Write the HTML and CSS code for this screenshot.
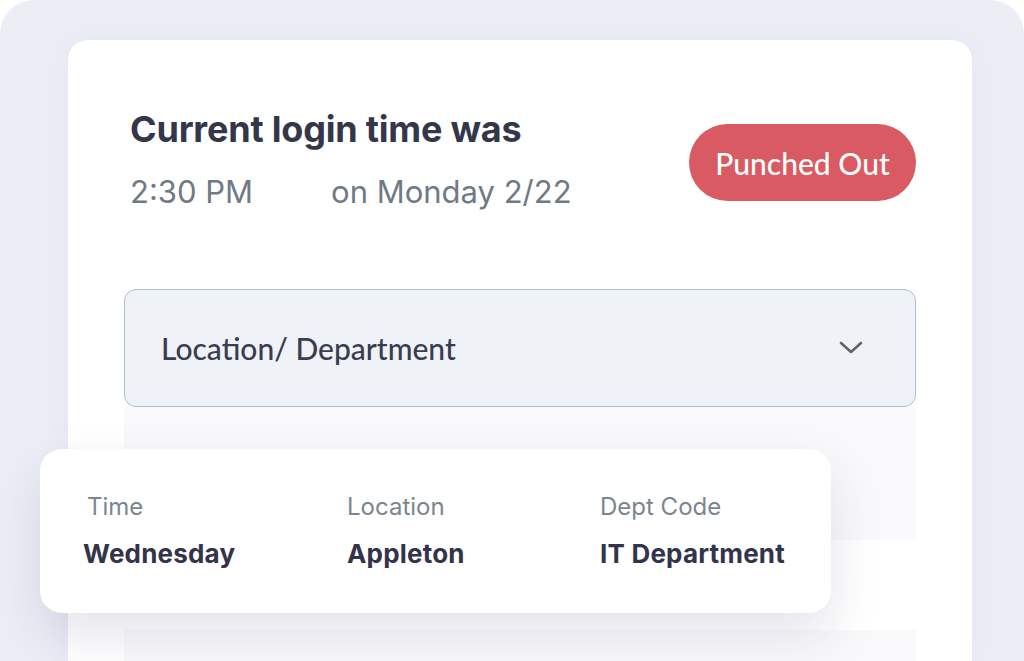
FILE: index.html
```html
<!DOCTYPE html>
<html lang="en">
<head>
  <meta charset="UTF-8">
  <meta name="viewport" content="width=device-width, initial-scale=1.0">
  <title>Punch Status</title>
  <link rel="stylesheet" href="styles.css">
</head>
<body>
  <div class="frame">
    <div class="card">
      <div class="header">
        <div class="login">
          <h1>Current login time was</h1>
          <div class="when">
            <span>2:30 PM</span>
            <span>on Monday 2/22</span>
          </div>
        </div>
        <div class="badge">Punched Out</div>
      </div>

      <div class="select">
        <span>Location/ Department</span>
        <svg class="chevron" width="24" height="14" viewBox="0 0 24 14">
          <path d="M2 2 L12 11 L22 2" fill="none" stroke="#5f636e" stroke-width="2.6" stroke-linecap="round" stroke-linejoin="round"/>
        </svg>
      </div>

      <div class="row"></div>
      <div class="row row-next"></div>

      <!-- floating detail card -->
      <div class="detail">
        <div class="col">
          <div class="label">Time</div>
          <div class="value">Wednesday</div>
        </div>
        <div class="col">
          <div class="label">Location</div>
          <div class="value">Appleton</div>
        </div>
        <div class="col">
          <div class="label">Dept Code</div>
          <div class="value">IT Department</div>
        </div>
      </div>
    </div>
  </div>
</body>
</html>
```

FILE: styles.css
```css
body {
  margin:0;
  padding:0;
  background:#ffffff;
  font-family:"Inter", "Noto Sans", sans-serif;
}

.frame {
  background:#eceef6;
  height:661px;
  border-radius:34px 34px 0 0;
  padding:40px 52px 0 68px;
  box-sizing:border-box;
  overflow:hidden;
}

.card {
  position:relative;
  background:#ffffff;
  height:621px;
  border-radius:20px 20px 0 0;
  padding:69px 56px 0 56px;
  box-sizing:border-box;
  box-shadow:0 0 30px rgba(60, 70, 120, 0.05);
}

.header {
  display:flex;
  justify-content:space-between;
  align-items:flex-start;
  height:180px;
  padding-left:6px;
}
.header h1 {
  margin:0;
  font-size:36px;
  line-height:40px;
  font-weight:700;
  color:#34364a;
  letter-spacing:-0.2px;
}
.when {
  margin-top:25px;
  display:flex;
  gap:78px;
  font-size:31px;
  line-height:36px;
  color:#6f7a85;
}

.badge {
  margin-top:15px;
  width:227px;
  height:77px;
  border-radius:39px;
  background:#d95a62;
  color:#ffffff;
  font-family:"Lato", sans-serif;
  font-size:30px;
  font-weight:500;
  display:flex;
  align-items:center;
  justify-content:center;
}

.select {
  height:118px;
  box-sizing:border-box;
  border:1.5px solid #aebfd6;
  border-radius:12px;
  background:#eff3f8;
  display:flex;
  align-items:center;
  justify-content:space-between;
  padding:0 52px 0 36px;
  font-family:"Lato", sans-serif;
  font-size:30px;
  font-weight:500;
  color:#3a3d4f;
}

.row {
  height:133px;
  background:#f9f9fb;
}
.row-next {
  margin-top:90px;
}

.detail {
  position:absolute;
  left:-28px;
  top:409px;
  width:791px;
  height:164px;
  box-sizing:border-box;
  background:#ffffff;
  border-radius:22px;
  box-shadow:0 22px 50px rgba(45, 50, 100, 0.13);
  padding:44px 0 0 43px;
  display:grid;
  grid-template-columns:264px 253px auto;
}
.label {
  font-size:24px;
  line-height:28px;
  color:#7b8590;
  padding-left:4px;
}
.col:nth-child(n+2) .label {
  padding-left:0;
}
.value {
  margin-top:18px;
  font-size:26px;
  line-height:30px;
  font-weight:700;
  color:#33344a;
  letter-spacing:0.2px;
}
```
